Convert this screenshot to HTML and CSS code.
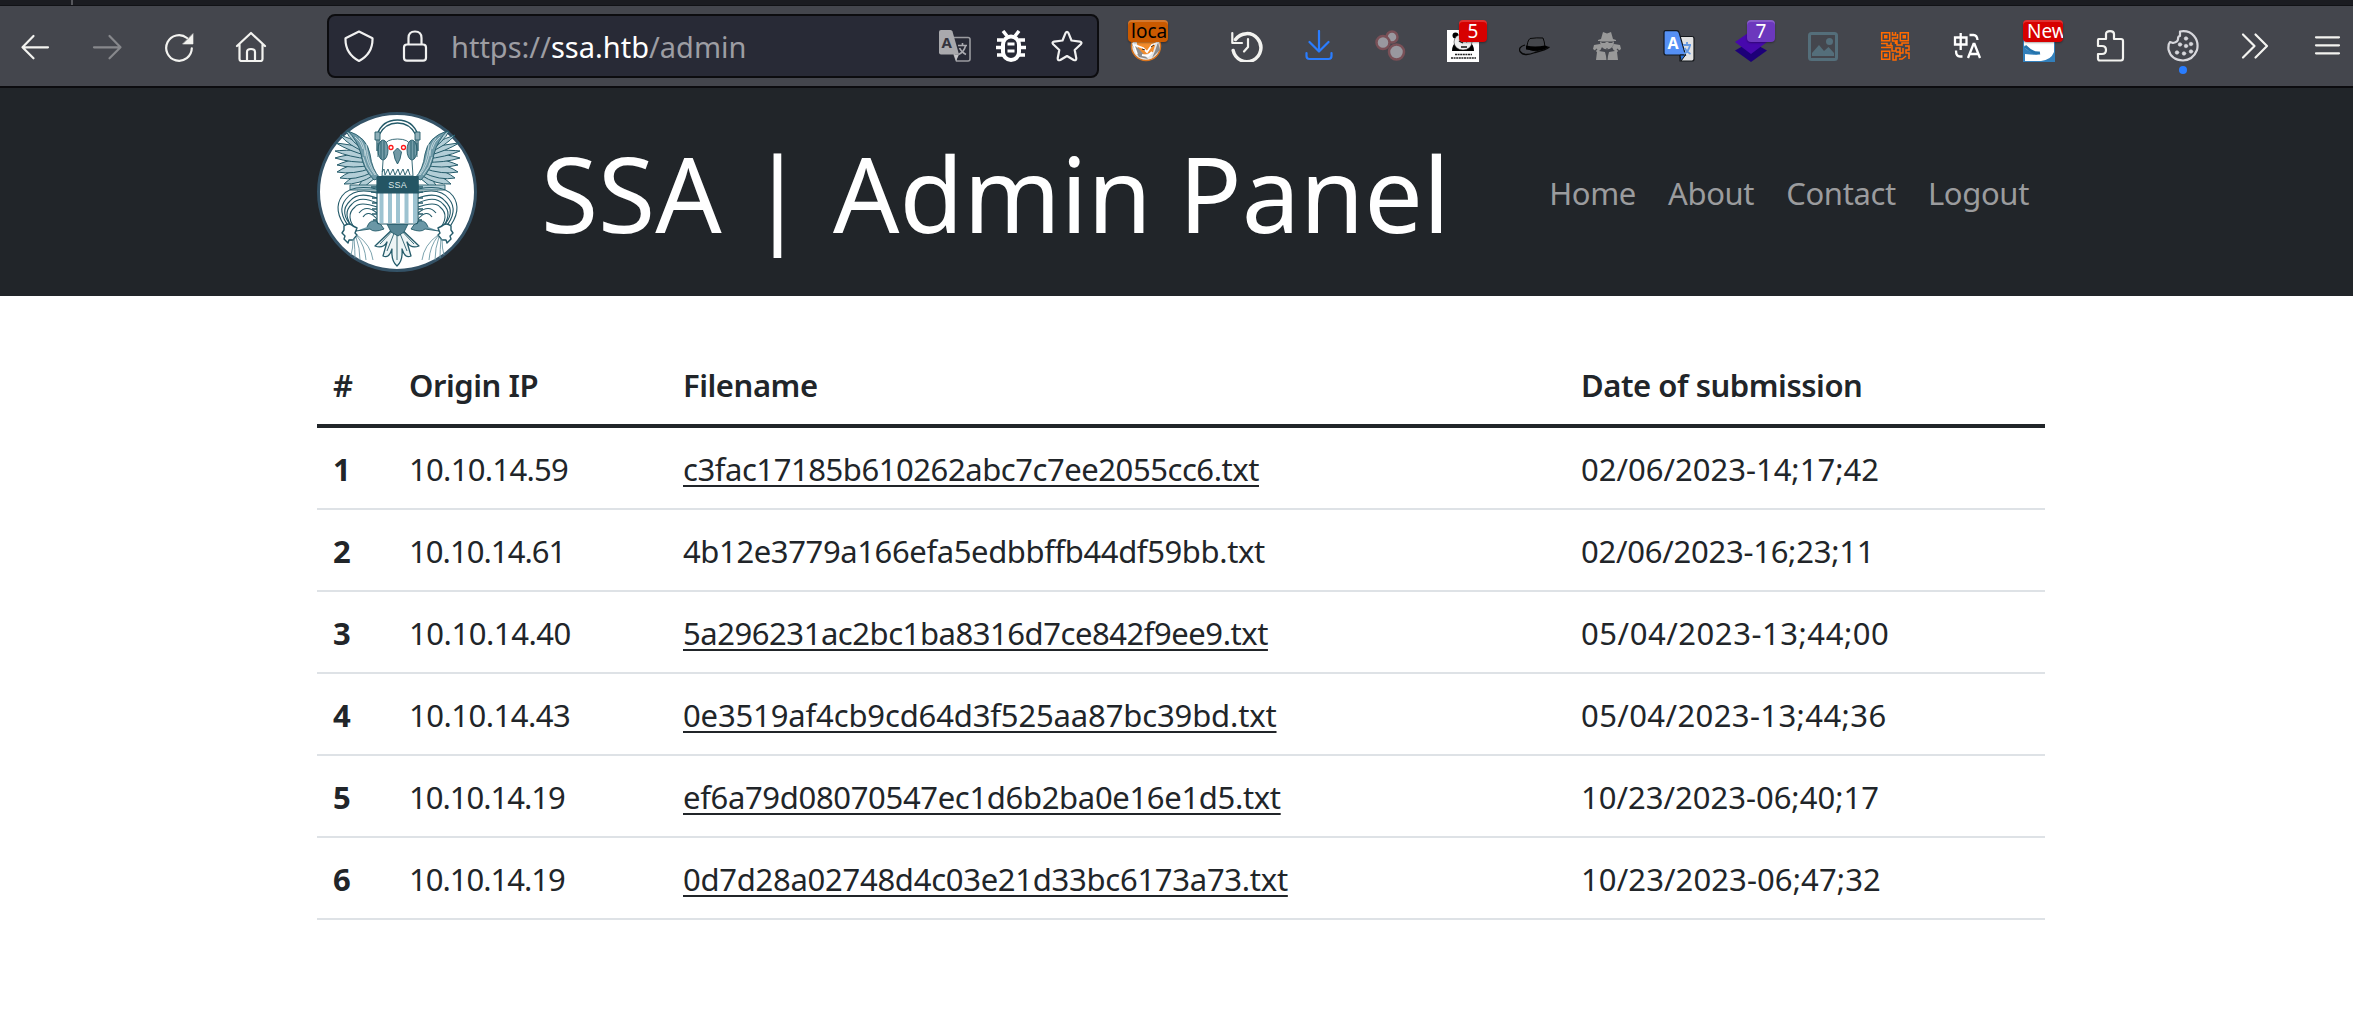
FILE: index.html
```
<!DOCTYPE html>
<html lang="en">
<head>
<meta charset="utf-8">
<title>SSA | Admin Panel</title>
<link rel="stylesheet" href="styles.css">
</head>
<body>
<div class="tabstrip"><span class="tab-divider"></span></div>
<div class="toolbar">
  <div class="nav-buttons">
    <span class="tool"><svg class="icon line" viewBox="0 0 32 32"><path d="M28 17.300H2.500M13.500 6L2.500 17.300 13.500 28.300"/></svg></span>
    <span class="tool dim"><svg class="icon line" viewBox="0 0 32 32"><path d="M2 17.3h26M17.500 6L28.500 17.300 17.500 28.300"/></svg></span>
    <span class="tool"><svg class="icon line" viewBox="0 0 32 32"><path d="M28.800 18.300A12.800 12.800 0 1 1 24 8"/><path class="solid" d="M30 4v10H20z"/></svg></span>
    <span class="tool"><svg class="icon line" viewBox="0 0 32 32"><path d="M2 16L16 3l14 13M4.500 14v15q0 2 2 2h19q2 0 2-2V14M12 31V22q0-3 4-3t4 3v9"/></svg></span>
  </div>
  <div class="urlbar">
    <svg class="icon line shield" viewBox="0 0 32 32"><path d="M16 1.500L29.500 8.200Q30 23.500 16 31 2 23.500 2.500 8.200Z"/></svg>
    <svg class="icon line lock" viewBox="0 0 32 32"><path d="M9.500 14V8q0-6.500 6.500-6.500T22.500 8v6"/><rect x="5" y="14.500" width="22" height="16.200" rx="3"/></svg>
    <span class="url">https://<b>ssa.htb</b>/admin</span>
    <span class="url-actions">
      <svg class="icon" viewBox="0 0 32 32"><path d="M14 7.500h15q2 0 2 2V29q0 2-2 2H17.500L15 24" fill="none" stroke="#9a9ba0" stroke-width="1.600"/><path d="M2 0h9.500q1.500 0 2 1.500L20 24.500H2q-2 0-2-2V2Q0 0 2 0z" fill="#a9a9ad"/><path d="M20 24.500L17 31l-2-6.500z" fill="#c5c5c8"/><text class="glyph" x="2.500" y="18" font-size="15" fill="#33343e">A</text><path d="M19 15.500h9M23.500 13v2.500M26.500 16q-1.500 6-7 8.500M20.500 18q2 4.500 6.500 6.500" fill="none" stroke="#aaaab0" stroke-width="1.600"/></svg>
      <svg class="icon" viewBox="0 0 32 32"><g fill="none" stroke="#fff"><path stroke-width="3.500" d="M8 1l4 5M24 1l-4 5M2 10h6M1 17.500h7M2 25h6M30 10h-6M31 17.500h-7M30 25h-6"/><rect x="8" y="6.500" width="16" height="23.500" rx="8" stroke-width="4"/><path stroke-width="3" d="M12.500 14h7M12.500 21h7"/></g></svg>
      <svg class="icon line" viewBox="0 0 32 32"><path d="M14.400 3.300Q16 .500 17.600 3.300L20.500 10.500 29 11.600Q31.500 12.200 29.800 14.200L23.700 20 25.300 28.300Q25.300 31 22.700 30L16 26 9.300 30Q6.700 31 6.700 28.300L8.300 20 2.200 14.200Q.500 12.200 3 11.600L11.500 10.500Z"/></svg>
    </span>
  </div>
  <span class="tool fox"><svg class="icon" viewBox="0 0 32 32"><circle cx="16" cy="16" r="14.500" fill="#e8e8e8" stroke="#d8741d" stroke-width="1.500"/><path d="M6 8l7 4 14-3-4 13-9 3-6-6z" fill="#f28c2c"/><path d="M1 13l8 14 9 2-9-10zM28 12l2 8-8 8 3-7z" fill="#8b8b8b"/><path d="M3 13l4 11M5 15l8 3 4 4 5-7 7-3M12 25l6 1 4-4" fill="none" stroke="#fff" stroke-width="1.800"/><path d="M12 19l3 1M21 17l3-2" stroke="#382416"/></svg><span class="badge orange">loca</span></span>
  <div class="extensions">
    <span class="tool"><svg class="icon line" viewBox="0 0 32 32"><path stroke-width="3.500" d="M4.500 9.500A14 14 0 1 1 2.200 20.500"/><path d="M1.300 3v10H11M17 9v8l-4 4.500"/></svg></span>
    <span class="tool download"><svg class="icon line" viewBox="0 0 32 32"><path d="M16 1v20M6.500 12l9.500 9.500 9.500-9.500M3.500 23v3q0 3 3 3h19q3 0 3-3v-3"/></svg></span>
    <span class="tool"><svg class="icon" viewBox="0 0 32 32"><g fill="#99989f" stroke="#795057" stroke-width="2.500"><circle cx="17" cy="7" r="5.500"/><circle cx="8" cy="12.500" r="6.500"/><circle cx="21.500" cy="22" r="7.500"/></g></svg></span>
    <span class="tool"><svg class="icon" viewBox="0 0 32 32"><path fill="#fff" d="M0 0h32v32H0z"/><path d="M5 21q0-7 5-9h12q5 2 5 9z"/><circle cx="8.500" cy="5.500" r="3"/><ellipse cx="16" cy="12" rx="9" ry="8" fill="#eee" stroke="#222" stroke-width=".5"/><path d="M12 11l4 2M19 12l3-1M14 17h6" stroke="#111" stroke-width="1.300"/><path d="M8 24.500h17M4 28h25" stroke="#222" stroke-width="1.500" stroke-dasharray="2 .600"/></svg><span class="badge red">5</span></span>
    <span class="tool"><svg class="icon" viewBox="0 0 32 32"><path d="M6 15Q-1 17 1 21.500 5 27 16 22.500 27 20 30.500 17" fill="none" stroke="#080808" stroke-width="1.300"/><path d="M8 18.500Q8 11 11 8.500q7-1 13-.500 1.500 3 2 9.500-9 6-18 1z" fill="#45474c" stroke="#080808"/><path d="M7 15.500q9 2 19 0l4 1.500q-6 4-14 3.500l-9-1z"/></svg></span>
    <span class="tool"><svg class="icon" viewBox="0 0 32 32"><g fill="#999"><path d="M10 9l2-7 4 1.500L20 2l2 7 3 1v1H7v-1zM9 11.500h14q0 7-7 8-7-1-7-8zM3 15l6-1 2 3q-1 3-3 4l6 1 2 8H5l1-8-4-3zM29 15l-6-1-2 3q1 3 3 4l-6 1-2 8h11l-1-8 4-3z"/></g><path d="M10.500 12.500h4M17.500 12.500h4M16 18v12M6 19l-2 2M26 19l2 2" stroke="#494b50" stroke-width="1.200"/></svg></span>
    <span class="tool"><svg class="icon" viewBox="0 0 32 32"><path d="M16 6.500h13q2 0 2 2V29q0 2-2 2H17z" fill="#e2e2e2" stroke="#15181c" stroke-width="1.200"/><path d="M2.500.700h11q2 0 2.600 2L22.500 25H3q-2 0-2-2V2.500Q1 .700 2.500.700z" fill="#5590f5" stroke="#111820" stroke-width="1.200"/><path d="M17 25h5.500L18 31z" fill="#2874df" stroke="#111"/><text class="glyph" x="4.500" y="19" font-size="16" fill="#fff">A</text><path d="M20 15h8M24 12v3M27 15q-1 6-6 9M21.500 18q2 4 6 6" fill="none" stroke="#6599e3" stroke-width="1.800"/></svg></span>
    <span class="tool"><svg class="icon" viewBox="0 0 32 32"><path fill="#1d0078" d="M0 20.500l16-9 16 9L16 32z"/><path fill="#4708ad" d="M0 12L16 1l16 11-16 12z"/></svg><span class="badge purple">7</span></span>
    <span class="tool"><svg class="icon" viewBox="0 0 32 32"><rect x="2.500" y="3.500" width="27" height="26" rx="2" fill="none" stroke="#546e7a" stroke-width="3"/><circle cx="22.500" cy="11.500" r="3.500" fill="#546e7a"/><path fill="#546e7a" d="M5 26v-3l7-8 5 6 4.500-4L27 23v3z"/></svg></span>
    <span class="tool"><svg class="icon" viewBox="0 0 32 32"><g fill="none" stroke="#ff6a00" stroke-width="1.500"><path d="M2.700 2.700h8v8h-8zM21.300 2.700h8v8h-8zM2.700 21.300h8v8h-8z"/><path stroke-width="3.500" d="M5 6.700h3.500M23.500 6.700H27M5 25.300h3.500"/><path d="M13.500 2v3h3V2M18.500 4v4h-5v3h3v3M2 13.500h6v2h4v-3M2 17.500h10M18 10v5h5v-2h7M13 15v6h4v-3h4v4h-4M26 16h4v4h-3v3h3v6M14 23v7h3v-4h4v-3h3v-5M20 29h3l4-3"/></g></svg></span>
    <span class="tool"><svg class="icon" viewBox="0 0 32 32"><g fill="none" stroke="#fff" stroke-width="2.300"><path d="M4 7.500h11.500v7H4zM9.700 3v17M18.500 5h4q3.500 0 4 5M5 20.500q0 6 4 6h2.500"/><path d="M17 28l5.500-14h1L29 28M19 24h8"/></g></svg></span>
    <span class="tool"><svg class="icon" viewBox="0 0 32 32"><path fill="#327fbb" d="M0 0h32v32H0z"/><path d="M31 12v10q-3 8-13 9H2v-7q14 2 15-1Q3 23 1 15v-4z" fill="#fff"/><path d="M2 16q8 8 15 7" fill="none" stroke="#2474ad" stroke-width="3"/></svg><span class="badge red clip">New</span></span>
    <span class="tool"><svg class="icon line" viewBox="0 0 32 32"><path d="M3.500 9H11V4q0-2.800 4-2.800T19 4v5h7q2 0 2 2v17q0 2.500-2 2.500H5q-2 0-2-2V24h4q4 0 4-4t-4-4H3v-5q0-2 .500-2z"/></svg></span>
    <span class="tool"><svg class="icon line cookie" viewBox="0 0 32 32"><path d="M13 1.500Q22 0 27 6q5 6 3 14-4 10-14 10.500Q4 30 1.500 19.500 1 14 3 12l3 1q5-1 5-4t2-3z"/><g class="solid"><circle cx="19" cy="8.500" r="1.800"/><circle cx="13" cy="14.500" r="1.800"/><circle cx="24" cy="14" r="1.800"/><circle cx="19" cy="16" r="1.800"/><circle cx="10" cy="22.500" r="1.800"/><circle cx="17" cy="23.500" r="1.800"/><circle cx="24" cy="21.500" r="1.800"/></g></svg><span class="attention"></span></span>
    <span class="tool"><svg class="icon line" viewBox="0 0 32 32"><path d="M4 4.500L15.500 16 4 27.500M16.500 4.500L28 16 16.500 27.500"/></svg></span>
    <span class="tool"><svg class="icon line" viewBox="0 0 32 32"><path d="M5 7.300h23M5 15.300h23M5 23.300h23"/></svg></span>
  </div>
</div>
<header class="navbar">
  <div class="container">
    <svg class="seal" viewBox="0 0 160 160">
      <defs>
        <g id="wing">
          <g fill="#b3ced7" stroke-width="1">
            <path d="M58 66Q50 74 40 78 42 70 54 60z"/>
            <path d="M57 63Q42 73 27 72 34 65 53 56z"/>
            <path d="M56 60Q38 69 23 66 30 60 52 52z"/>
            <path d="M55 56Q36 63 20 60 28 54 51 48z"/>
            <path d="M54 53Q36 57 20 53 28 49 50 44z"/>
            <path d="M53 50Q34 51 18 46 26 43 49 41z"/>
            <path d="M52 47Q32 45 18 39 26 38 47 38z"/>
            <path d="M51 44Q32 39 19 31 28 32 45 35z"/>
            <path d="M50 41Q32 34 23 23 32 26 43 31z"/>
            <path d="M50 40Q34 30 29 19 46 24 51 37z"/>
          </g>
          <path d="M31 19Q50 25 53 42 55 58 63 66L57 68Q46 57 44 42 40 28 31 19z" fill="#6f9aa8"/>
          <path d="M38 25q6 4 8 12M42 26q6 7 6 18M46 45q2 10 9 18M48 38q2 15 10 25M49 32q2 20 10 31" stroke="#c7dbe1"/>
          <path d="M60 73L33 73v5h27z" fill="#b3ced7"/>
          <path d="M60 77Q34 72 25 84 15 98 30 117M60 81Q38 75 29 87 19 99 33 116M60 86Q41 79 33 89 21 100 36 116M60 91Q43 83 35 92 24 102 37 117M60 95Q43 89 38 95 27 104 40 119M60 101Q49 92 42 101M60 107Q51 97 46 105" fill="none" stroke-width="1.100"/>
          <path d="M50 115q3-9 12-5l5 7q-10 4-14 0l-14 2" fill="#6a97a6"/>
          <path d="M27 114q5-4 9 0l4 2-2 5 2 2-4 5h-4l-1 3-4-4 1-3-3-3 2-3z" fill="#fff" stroke-width="1.400"/>
          <path d="M37 126Q38 139 38 146M39 125Q43 136 43 148M40 124Q48 134 49 148M40 123Q54 133 56 148M36 127Q36 137 34 143" stroke="#6d98a5"/>
        </g>
      </defs>
      <circle cx="80" cy="80" r="78.500" fill="#fff" stroke="#345266" stroke-width="3"/>
      <g fill="none" stroke="#245b6a" stroke-width=".900" stroke-linejoin="round">
        <use href="#wing"/><use href="#wing" transform="translate(161 0) scale(-1 1)"/>
        <path d="M80 113L58 134q8 3 12-4l-4 14q6 3 9-7-1 12 5 17 6-5 5-17 3 10 9 7l-4-14q4 7 12 4z" fill="#edf4f5" stroke-width="1.300"/>
        <path d="M80 114l-17 18M80 114l-10 25M80 114v34M80 114l10 25M80 114l17 18"/>
        <path d="M70 112h21l-4 8-6 4-7-4z" fill="#558493"/>
        <path d="M60 39V23Q65 8 80.500 8T101 23v16M62 38V23Q68 11 80.500 11T99 23v15" stroke-width="1.300"/>
        <path d="M58 20h5v8h-5zM98 20h5v8h-5z" fill="#8fafb9"/>
        <path d="M67 34q2-7 13.500-7T94 34l2 30H65z" fill="#fff"/>
        <ellipse cx="66" cy="38" rx="5" ry="10" fill="#759da9"/><ellipse cx="95" cy="38" rx="5" ry="10" fill="#759da9"/>
        <path d="M61 31v14M64 29v18M67 29v18M94 29v18M97 29v18M100 31v14M65 60l2-3 1 6 3-6 2 6 3-6 2 6 3-6 2 6 3-6 2 6 3-6 2 6"/>
        <path d="M80.500 36l-4 4q1 8 4 12 3-4 4-12z" fill="#7399a5"/>
        <circle cx="74" cy="35.500" r="2" stroke="#ff1717" stroke-width="1.300"/><circle cx="86.500" cy="35.500" r="2" stroke="#ff1717" stroke-width="1.300"/>
        <path d="M54 75h52M54 80h52M55 86h51M55 91h51M55 97h51M55 102h51M56 108h49" stroke-width="1.500"/>
        <path d="M60 65h41v44q0 3-3 3H63q-3 0-3-3z" fill="#fff" stroke-width="1.200"/>
        <path d="M64.500 81v30M73 81v30M81 81v30M89.500 81v30M98 81v30" stroke="#9dc3d1" stroke-width="4"/>
      </g>
      <path fill="#245564" d="M60 64h41.500v17.500H60z"/>
      <text class="seal-text" x="80.700" y="76">SSA</text>
    </svg>
    <h1 class="brand">SSA | Admin Panel</h1>
    <nav class="links"><a>Home</a><a>About</a><a>Contact</a><a>Logout</a></nav>
  </div>
</header>
<main class="content">
  <table class="submissions">
    <thead><tr><th class="num">#</th><th class="ip">Origin IP</th><th class="file">Filename</th><th>Date of submission</th></tr></thead>
    <tbody>
      <tr class="r1"><th>1</th><td>10.10.14.59</td><td><a>c3fac17185b610262abc7c7ee2055cc6.txt</a></td><td>02/06/2023-14;17;42</td></tr>
      <tr class="r2"><th>2</th><td>10.10.14.61</td><td>4b12e3779a166efa5edbbffb44df59bb.txt</td><td>02/06/2023-16;23;11</td></tr>
      <tr class="r3"><th>3</th><td>10.10.14.40</td><td><a>5a296231ac2bc1ba8316d7ce842f9ee9.txt</a></td><td>05/04/2023-13;44;00</td></tr>
      <tr class="r4"><th>4</th><td>10.10.14.43</td><td><a>0e3519af4cb9cd64d3f525aa87bc39bd.txt</a></td><td>05/04/2023-13;44;36</td></tr>
      <tr class="r5"><th>5</th><td>10.10.14.19</td><td><a>ef6a79d08070547ec1d6b2ba0e16e1d5.txt</a></td><td>10/23/2023-06;40;17</td></tr>
      <tr class="r6"><th>6</th><td>10.10.14.19</td><td><a>0d7d28a02748d4c03e21d33bc6173a73.txt</a></td><td>10/23/2023-06;47;32</td></tr>
    </tbody>
  </table>
</main>
</body>
</html>
```
FILE: styles.css
```
* { box-sizing: border-box; }
body { margin: 0; background: #fff; color: #212529; font-family: "Noto Sans", sans-serif; font-size: 31px; line-height: 48px; overflow: hidden; }

/* browser chrome */
.tabstrip { height: 6px; background: #1b1c21; border-bottom: 1px solid #111216; }
.tab-divider { display: block; width: 2px; height: 5px; margin-left: 71px; background: #56575c; }
.toolbar { display: flex; align-items: center; height: 82px; background: #44464d; border-bottom: 2px solid #0c0c0f; }
.nav-buttons, .extensions { display: flex; flex: none; }
.nav-buttons { width: 327px; }
.tool { position: relative; flex: none; display: flex; justify-content: center; width: 72px; color: #f3f3f0; }
.nav-buttons .tool { width: 71.7px; }
.tool.dim { color: #87888c; }
.tool.download { color: #2a7dff; }
.icon { display: block; flex: none; width: 32px; height: 32px; }
.line { fill: none; stroke: currentColor; stroke-width: 2.2; stroke-linecap: round; stroke-linejoin: round; }
.solid { fill: currentColor; stroke-width: .6; }
.tool .cookie { color: #d7d7dc; }
.glyph { font-weight: 700; font-family: "Noto Sans", sans-serif; }
.urlbar { display: flex; flex: none; align-items: center; width: 772px; height: 64px; padding: 0 14px; border: 2px solid #0c0c0f; border-radius: 8px; background: #282a36; color: #f1f1f1; }
.lock { margin-left: 24px; }
.url { margin-left: 20px; padding-top: 2px; font-size: 29px; line-height: 40px; color: #9d9da3; }
.url b { color: #fff; font-weight: 400; }
.url-actions { display: flex; gap: 24px; margin-left: auto; }
.tool.fox { width: 94px; }
.extensions { margin-left: 18px; }
.badge { position: absolute; top: -10px; right: 12px; width: 28px; height: 22px; border-radius: 4px; color: #fff; font-size: 19px; line-height: 22px; text-align: center; box-shadow: 0 1px 2px #0005, inset 0 2px #ffffff30; }
.badge.red { background: #d70000; }
.badge.purple { background: #6c38bd; }
.badge.orange { right: 25px; width: 40px; background: #ca5a00; color: #000; padding-left: 3px; text-align: left; }
.badge.clip { width: 40px; padding-left: 4px; text-align: left; overflow: hidden; }
.attention { position: absolute; top: 36px; left: 32px; width: 8px; height: 8px; border-radius: 50%; background: #2a7dff; }

/* site header */
.navbar { height: 208px; background: #212529; }
.container { display: flex; align-items: center; width: 1728px; height: 208px; margin-left: 317px; }
.seal { flex: none; width: 160px; height: 160px; }
.seal-text { fill: #dce7e9; font: 400 9px "Liberation Sans", sans-serif; letter-spacing: .3px; text-anchor: middle; }
.brand { margin: 0 0 0 64px; padding-top: 2px; font-size: 104px; line-height: 144px; font-weight: 400; color: #fff; white-space: nowrap; }
.links { display: flex; margin-left: auto; padding-top: 2px; letter-spacing: -.35px; color: #9b9c9e; }
.links a { padding: 16px; }

/* submissions */
.content { width: 1728px; margin: 48px 0 0 317px; }
.submissions { width: 100%; table-layout: fixed; border-collapse: separate; border-spacing: 0; text-align: left; }
th, td { height: 82px; padding: 17px 16px 15px; border-bottom: 2px solid #dee2e6; white-space: nowrap; line-height: 48px; }
thead th { height: 84px; border-bottom: 4px solid #212529; font-weight: 600; letter-spacing: -.45px; }
.num { width: 76px; }
.ip { width: 274px; }
.file { width: 898px; }
.submissions a { text-decoration: underline; text-decoration-thickness: 2px; text-underline-offset: 4px; text-decoration-skip-ink: none; }
.r1 td:nth-child(2) { letter-spacing: -.7px; }
.r2 td:nth-child(2) { letter-spacing: -.95px; }
.r3 td:nth-child(2) { letter-spacing: -.45px; }
.r4 td:nth-child(2) { letter-spacing: -.5px; }
.r5 td:nth-child(2), .r6 td:nth-child(2) { letter-spacing: -1px; }
.r1 td:nth-child(3) { letter-spacing: -.44px; }
.r2 td:nth-child(3) { letter-spacing: -.38px; }
.r3 td:nth-child(3) { letter-spacing: -.45px; }
.r4 td:nth-child(3) { letter-spacing: -.14px; }
.r5 td:nth-child(3) { letter-spacing: -.33px; }
.r6 td:nth-child(3) { letter-spacing: -.27px; }
.r2 td:nth-child(4) { letter-spacing: -.25px; }
.r3 td:nth-child(4) { letter-spacing: .55px; }
.r4 td:nth-child(4) { letter-spacing: .4px; }
.r6 td:nth-child(4) { letter-spacing: .1px; }
```
